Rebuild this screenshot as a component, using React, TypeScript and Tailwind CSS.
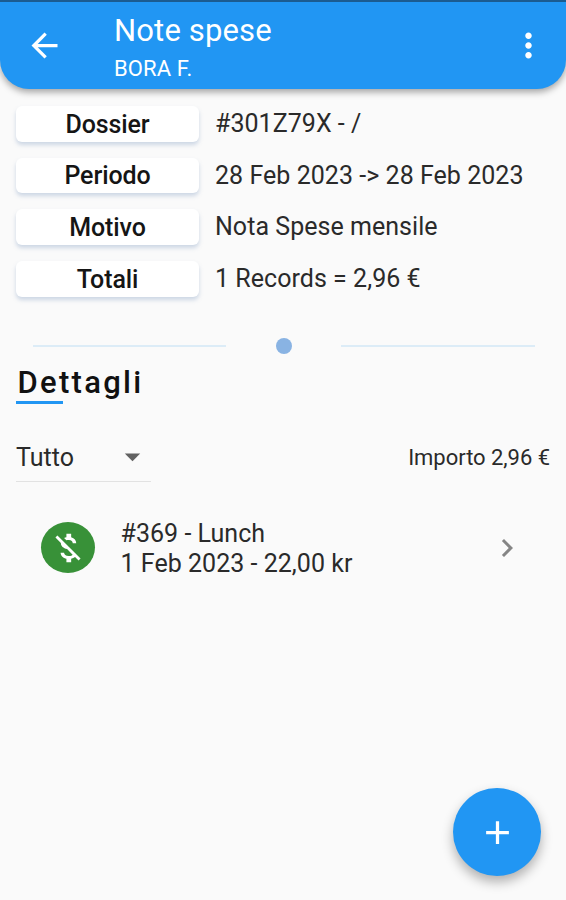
import { MdAdd, MdArrowBack, MdArrowDropDown, MdChevronRight, MdMoneyOff, MdMoreVert } from "react-icons/md";

const summary = [
  { label: "Dossier", value: "#301Z79X - /" },
  { label: "Periodo", value: "28 Feb 2023 -> 28 Feb 2023" },
  { label: "Motivo", value: "Nota Spese mensile" },
  { label: "Totali", value: "1 Records = 2,96 €" },
];

function Header() {
  return (
    <div className="bg-linear-to-b from-[#1b5b90] from-[2px] to-[#fafafa] to-[2px]">
      <header className="flex h-[89px] rounded-b-[29px] border-t-2 border-[#1b5b90] bg-[#2196f3] pr-[18px] pl-[25px] text-white shadow-[0_3px_7px_rgba(0,0,0,0.36)]">
        <button type="button" aria-label="Indietro" className="mt-[24px] size-[39px]">
          <MdArrowBack className="size-[39px]" />
        </button>
        <div className="ml-[50px] flex-1 whitespace-nowrap">
          <h1 className="mt-[11px] text-[31px] leading-[36px] tracking-[0.15px]">Note spese</h1>
          <p className="mt-[7px] text-[22px] leading-[26px] tracking-[0.1px]">BORA F.</p>
        </div>
        <button type="button" aria-label="Menu" className="mt-[24px] size-[39px]">
          <MdMoreVert className="size-[39px]" />
        </button>
      </header>
    </div>
  );
}

function SummaryRow({ label, value }: { label: string; value: string }) {
  return (
    <div className="flex h-[35.5px] items-center">
      <span className="flex h-full w-[183px] items-center justify-center rounded-[6px] bg-white pt-px text-[25px] font-medium tracking-[-0.1px] text-[#151515] shadow-[0_3px_4px_rgba(120,150,190,0.35)]">
        {label}
      </span>
      <span className="ml-4 text-[25px] tracking-[0.04px] whitespace-nowrap text-[#2a2a2a]">{value}</span>
    </div>
  );
}

function Divider() {
  return (
    <div className="mt-[41px] flex h-4 items-center justify-between pr-[15px] pl-[17px]">
      <span className="h-[2px] w-[193px] bg-[#dcecf7]" />
      <span className="size-4 rounded-full bg-[#89b3e3]" />
      <span className="h-[2px] w-[194px] bg-[#dcecf7]" />
    </div>
  );
}

export default function App() {
  return (
    <div className="relative h-[900px] w-[566px] overflow-hidden bg-[#fafafa] font-['Roboto',sans-serif] text-[#2a2a2a]">
      <Header />
      <main className="px-4">
        <section className="mt-[17px] flex flex-col gap-[16.2px]">
          {summary.map((row) => (
            <SummaryRow key={row.label} label={row.label} value={row.value} />
          ))}
        </section>
        <Divider />
        <h2 className="mt-[11px] ml-[1.5px] text-[31px] leading-[36px] font-medium tracking-[2.3px] text-[#111]">
          Dettagli
        </h2>
        <div className="h-[3px] w-[47px] bg-[#2196f3]" />
        <div className="mt-[29px] flex h-[49px] items-center justify-between">
          <button
            type="button"
            className="flex h-full w-[135px] items-center justify-between border-b border-[#e2e2e2] text-[25px]"
          >
            <span className="pt-[2px]">Tutto</span>
            <MdArrowDropDown className="size-[37px] text-[#616161]" />
          </button>
          <span className="text-[22px] tracking-[-0.04px] whitespace-nowrap">Importo 2,96 €</span>
        </div>
        <div className="mt-[36px] flex h-[60px] items-center">
          <span className="ml-[25px] flex h-[51px] w-[54px] items-center justify-center rounded-[50%] bg-[#389138] text-white">
            <MdMoneyOff className="size-[38px]" />
          </span>
          <p className="ml-[25.5px] flex-1 pt-[2px] text-[25px] leading-[30px] tracking-[0.03px] whitespace-nowrap">
            #369 - Lunch
            <br />1 Feb 2023 - 22,00 kr
          </p>
          <MdChevronRight className="mr-[25px] size-[36px] text-[#858585]" />
        </div>
      </main>
      <button
        type="button"
        aria-label="Aggiungi"
        className="absolute right-[25px] bottom-[24px] flex size-[88px] items-center justify-center rounded-full bg-[#2196f3] text-white shadow-[0_6px_12px_rgba(0,0,0,0.3)]"
      >
        <MdAdd className="size-[39px]" />
      </button>
    </div>
  );
}
